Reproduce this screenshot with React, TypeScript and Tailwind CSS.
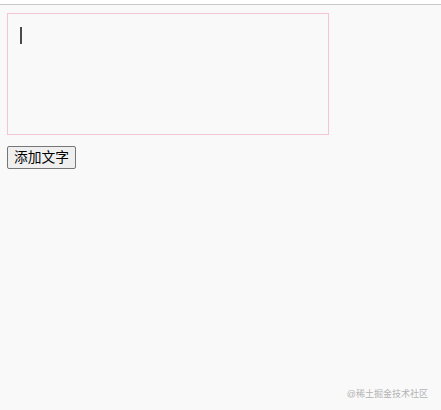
export default function App() {
  return (
    <div
      className="relative min-h-[410px] w-full bg-[#f9f9f9] text-black"
      style={{ fontFamily: '"Liberation Sans", "Noto Sans CJK SC", sans-serif' }}
    >
      <div className="h-[4px] bg-white" />
      <div className="h-px bg-[#c9c9c9]" />
      <div className="pl-[7px] pt-[8px]">
        <div className="flex h-[122px] w-[322px] border border-[#f4c6d1] px-[12px] pt-[13px]">
          <span className="h-[17px] w-[2px] bg-[#4a4a4a]" />
        </div>
        <button className="mt-[11px] h-[23px] rounded-[2px] border border-[#767676] bg-[#efefef] px-[6px] text-[13.75px] leading-none text-black">
          添加文字
        </button>
      </div>
      <span className="absolute bottom-[10px] right-[13px] text-[9px] leading-[12px] text-[#b3b3b3]">
        @稀土掘金技术社区
      </span>
    </div>
  );
}
